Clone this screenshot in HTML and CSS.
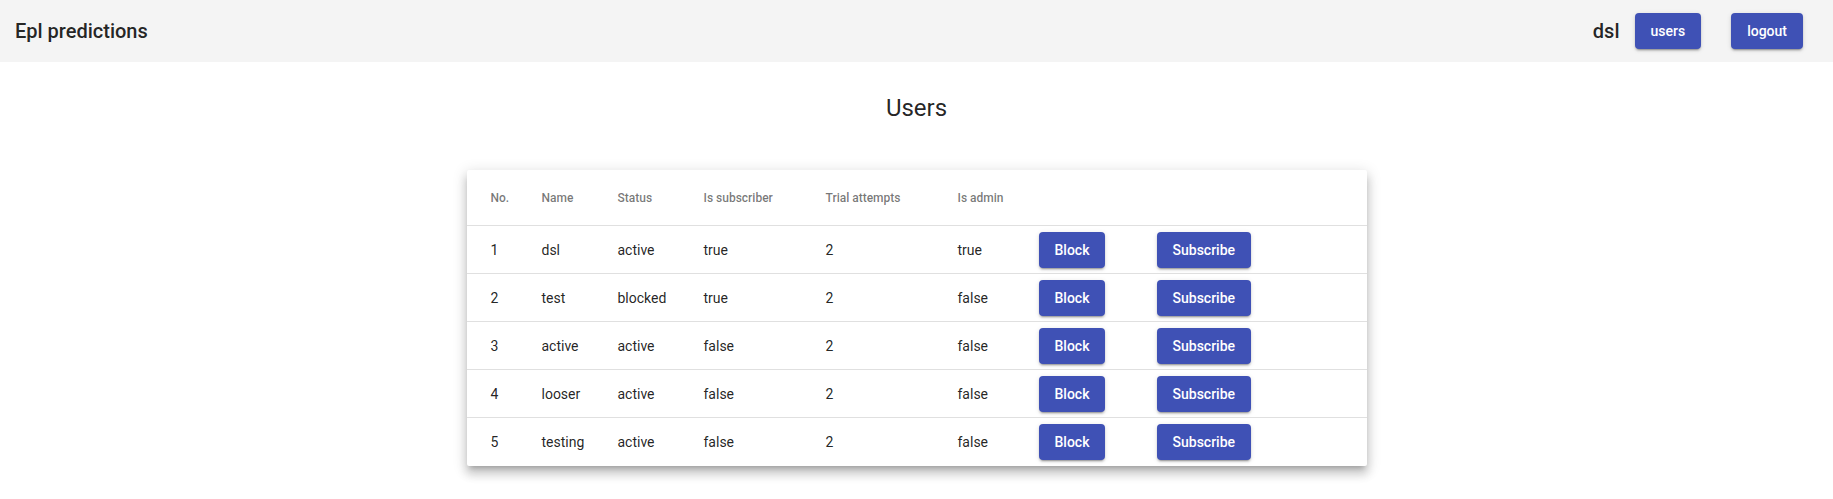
FILE: index.html
```html
<!DOCTYPE html>
<html>
<head>
<meta charset="utf-8">
<link rel="stylesheet" href="styles.css">
</head>
<body>
<header class="topbar">
  <div class="brand">Epl predictions</div>
  <div class="nav">
    <span class="username">dsl</span>
    <button class="btn">users</button>
    <button class="btn">logout</button>
  </div>
</header>
<main class="content">
  <h1 class="title">Users</h1>
  <div class="card">
    <div class="row head">
      <div class="cell">No.</div><div class="cell">Name</div><div class="cell">Status</div><div class="cell">Is subscriber</div><div class="cell">Trial attempts</div><div class="cell">Is admin</div><div class="cell"></div><div class="cell"></div>
    </div>
    <div class="row">
      <div class="cell">1</div><div class="cell">dsl</div><div class="cell">active</div><div class="cell">true</div><div class="cell">2</div><div class="cell">true</div><div class="cell"><button class="btn">Block</button></div><div class="cell"><button class="btn">Subscribe</button></div>
    </div>
    <div class="row">
      <div class="cell">2</div><div class="cell">test</div><div class="cell">blocked</div><div class="cell">true</div><div class="cell">2</div><div class="cell">false</div><div class="cell"><button class="btn">Block</button></div><div class="cell"><button class="btn">Subscribe</button></div>
    </div>
    <div class="row">
      <div class="cell">3</div><div class="cell">active</div><div class="cell">active</div><div class="cell">false</div><div class="cell">2</div><div class="cell">false</div><div class="cell"><button class="btn">Block</button></div><div class="cell"><button class="btn">Subscribe</button></div>
    </div>
    <div class="row">
      <div class="cell">4</div><div class="cell">looser</div><div class="cell">active</div><div class="cell">false</div><div class="cell">2</div><div class="cell">false</div><div class="cell"><button class="btn">Block</button></div><div class="cell"><button class="btn">Subscribe</button></div>
    </div>
    <div class="row">
      <div class="cell">5</div><div class="cell">testing</div><div class="cell">active</div><div class="cell">false</div><div class="cell">2</div><div class="cell">false</div><div class="cell"><button class="btn">Block</button></div><div class="cell"><button class="btn">Subscribe</button></div>
    </div>
  </div>
</main>
</body>
</html>
```
FILE: styles.css
```css
* { box-sizing: border-box; }
html, body { margin: 0; padding: 0; background: #fff; }
body { font-family: Roboto, "Liberation Sans", sans-serif; color: rgba(0,0,0,0.87); }

.topbar {
  height: 62px;
  background: #f4f4f4;
  display: flex;
  align-items: center;
  justify-content: space-between;
  padding: 0 30px 0 15px;
}
.brand { font-size: 20px; font-weight: 500; color: rgba(0,0,0,0.87); }
.nav { display: flex; align-items: center; }
.username { font-size: 20px; font-weight: 500; margin-right: 15px; }
.nav .btn + .btn { margin-left: 30px; }

.btn {
  font-family: Roboto, "Liberation Sans", sans-serif;
  font-size: 14px;
  font-weight: 500;
  line-height: 24px;
  height: 36px;
  padding: 6px 16px;
  border: none;
  border-radius: 4px;
  background: #3f51b5;
  color: #fff;
  box-shadow: 0 3px 1px -2px rgba(0,0,0,0.2), 0 2px 2px 0 rgba(0,0,0,0.14), 0 1px 5px 0 rgba(0,0,0,0.12);
  cursor: pointer;
}

.content { display: flex; flex-direction: column; align-items: center; padding-bottom: 33px; }
.title {
  margin: 31px 0 0;
  height: 77px;
  font-size: 24px;
  font-weight: 400;
  line-height: 30px;
}

.card {
  width: 900px;
  background: #fff;
  border-radius: 2px;
  box-shadow: 0 5px 5px -3px rgba(0,0,0,0.2), 0 8px 10px 1px rgba(0,0,0,0.14), 0 3px 14px 2px rgba(0,0,0,0.12);
}
.row {
  display: grid;
  grid-template-columns: 75px 76px 86px 122px 132px 81px 118px 1fr;
  align-items: center;
  height: 48px;
  border-bottom: 1px solid #e0e0e0;
  font-size: 14px;
  color: rgba(0,0,0,0.87);
}
.row:last-child { border-bottom: none; }
.row .cell:first-child { padding-left: 24px; }
.row.head {
  height: 56px;
  font-size: 12px;
  font-weight: 500;
  color: rgba(0,0,0,0.54);
}
.cell { white-space: nowrap; }
```
